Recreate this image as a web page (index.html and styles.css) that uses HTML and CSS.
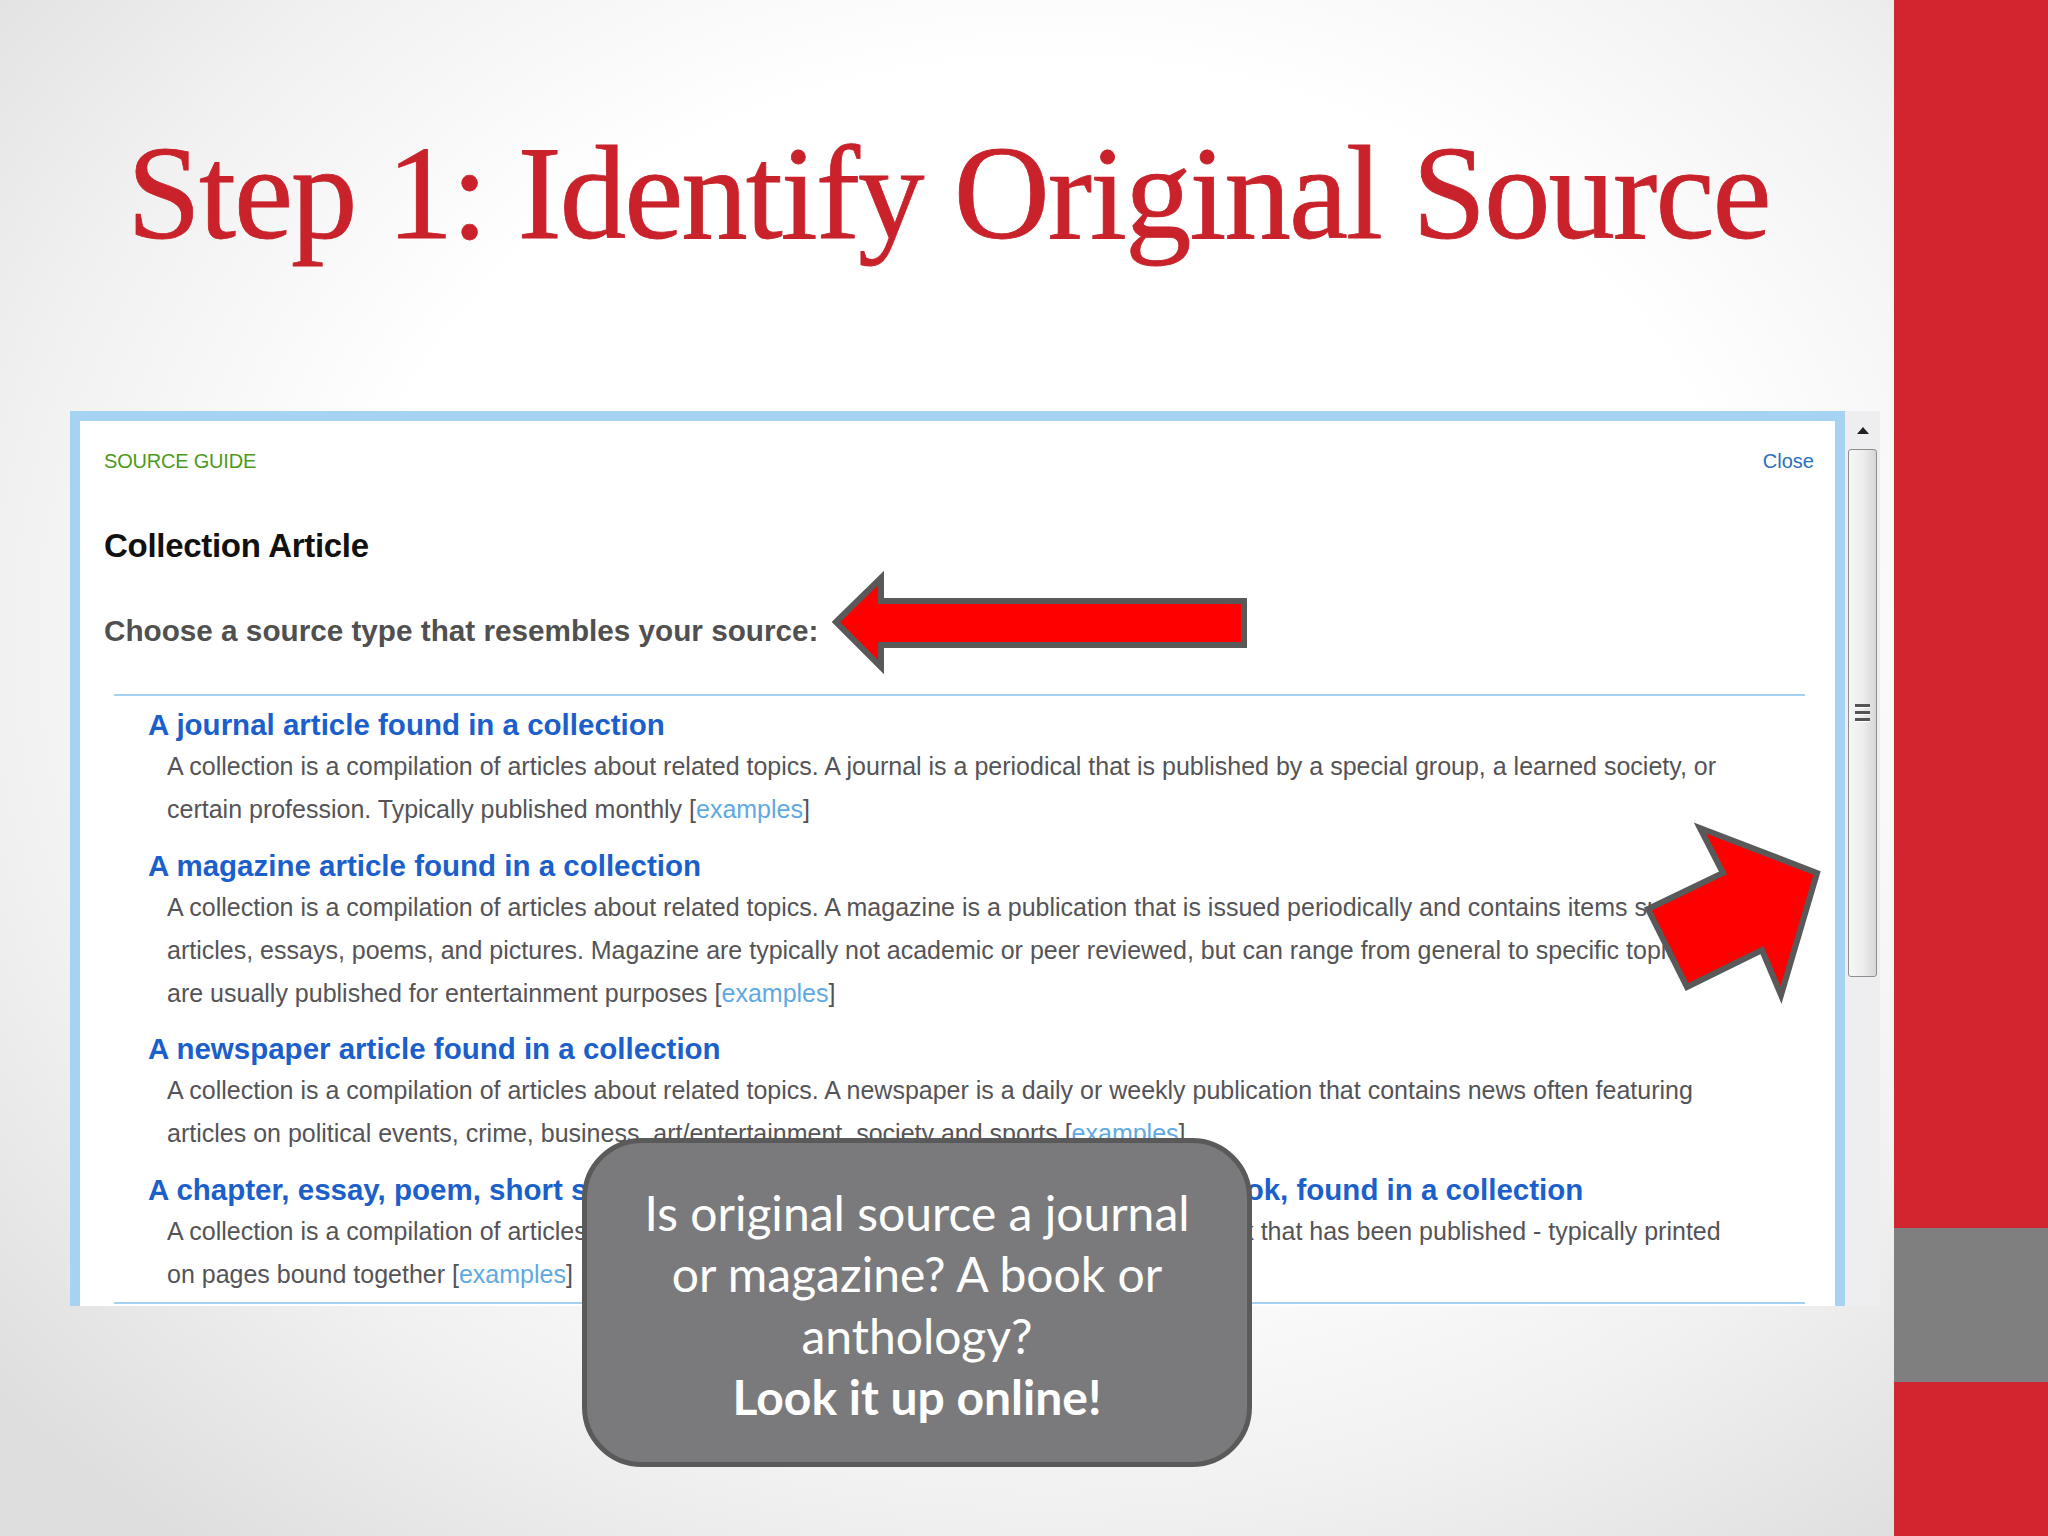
FILE: index.html
```html
<!DOCTYPE html>
<html lang="en">
<head>
<meta charset="utf-8">
<title>Step 1: Identify Original Source</title>
<link rel="stylesheet" href="styles.css">
</head>
<body>
<div class="slide">
  <main class="main">
    <h1 class="title">Step 1: Identify Original Source</h1>
    <div class="shot">
      <div class="dialog">
        <div class="dlg-head">
          <span class="guide">SOURCE GUIDE</span>
          <span class="close">Close</span>
        </div>
        <h2 class="dlg-title">Collection Article</h2>
        <p class="prompt">Choose a source type that resembles your source:</p>
        <div class="sep"></div>
        <div class="items">
          <div class="item">
            <div class="item-title">A journal article found in a collection</div>
            <div class="desc">
              <span class="ln">A collection is a compilation of articles about related topics. A journal is a periodical that is published by a special group, a learned society, or</span>
              <span class="ln">certain profession. Typically published monthly [<span class="ex">examples</span>]</span>
            </div>
          </div>
          <div class="item">
            <div class="item-title">A magazine article found in a collection</div>
            <div class="desc">
              <span class="ln">A collection is a compilation of articles about related topics. A magazine is a publication that is issued periodically and contains items such as</span>
              <span class="ln">articles, essays, poems, and pictures. Magazine are typically not academic or peer reviewed, but can range from general to specific topics and</span>
              <span class="ln">are usually published for entertainment purposes [<span class="ex">examples</span>]</span>
            </div>
          </div>
          <div class="item">
            <div class="item-title">A newspaper article found in a collection</div>
            <div class="desc">
              <span class="ln">A collection is a compilation of articles about related topics. A newspaper is a daily or weekly publication that contains news often featuring</span>
              <span class="ln">articles on political events, crime, business, art/entertainment, society and sports [<span class="ex">examples</span>]</span>
            </div>
          </div>
          <div class="item">
            <div class="item-title">A chapter, essay, poem, short story, or other section or portion of an edited book, found in a collection</div>
            <div class="desc">
              <span class="ln">A collection is a compilation of articles about related topics. A book is a long written or printed work that has been published - typically printed</span>
              <span class="ln">on pages bound together [<span class="ex">examples</span>]</span>
            </div>
          </div>
        </div>
        <div class="sep sep-bottom"></div>
      </div>
      <div class="scrollbar">
        <div class="sb-up"><span class="sb-tri"></span></div>
        <div class="sb-thumb">
          <span class="grip"></span>
          <span class="grip"></span>
          <span class="grip"></span>
        </div>
      </div>
    </div>
  </main>
  <aside class="side">
    <div class="band red-top"></div>
    <div class="band gray"></div>
    <div class="band red-bottom"></div>
  </aside>

  <svg class="arrow-left" width="430" height="110" viewBox="828 568 430 110" aria-hidden="true">
    <polygon points="836,622 881,578 881,601 1244,601 1244,645 881,645 881,667" />
  </svg>
  <svg class="arrow-right" width="200" height="200" viewBox="1636 816 200 200" aria-hidden="true">
    <polygon points="1648,909 1723,873 1700,828 1817,873 1781,995 1762,950 1687,987" />
  </svg>

  <div class="callout">
    <p class="callout-text">Is original source a journal<br>or magazine? A book or<br>anthology?<br><strong>Look it up online!</strong></p>
  </div>
</div>
</body>
</html>
```

FILE: styles.css
```css
html, body {
  margin: 0;
  padding: 0;
}

body {
  width: 2048px;
  height: 1536px;
  overflow: hidden;
  font-family: "Liberation Sans", Arial, sans-serif;
}

.slide {
  position: relative;
  width: 2048px;
  height: 1536px;
  display: flex;
  overflow: hidden;
  background: radial-gradient(ellipse 1400px 1150px at 1050px 640px, #ffffff 0%, #ffffff 50%, #f1f1f1 75%, #dedede 100%);
}

.main {
  width: 1894px;
  flex: none;
}

.title {
  margin: 127px 0 151px 127px;
  font-family: "Liberation Serif", "Times New Roman", serif;
  font-weight: normal;
  font-size: 133px;
  line-height: 133px;
  letter-spacing: -2px;
  color: #c9222b;
  white-space: nowrap;
  -webkit-text-stroke: 0.8px #c9222b;
}

/* Screenshot of the source guide dialog */
.shot {
  display: flex;
  margin-left: 70px;
  height: 895px;
}

.dialog {
  width: 1755px;
  border: 10px solid #a7d3f3;
  border-bottom: 0;
  background: #ffffff;
  overflow: hidden;
  display: flex;
  flex-direction: column;
}

.dlg-head {
  display: flex;
  justify-content: space-between;
  align-items: center;
  height: 30px;
  margin-top: 25px;
  padding: 0 21px 0 24px;
  font-size: 20px;
}

.guide {
  color: #4c9a1c;
  letter-spacing: -0.2px;
}

.close {
  color: #2a6fbc;
}

.dlg-title {
  margin: 50px 0 0 24px;
  height: 40px;
  line-height: 40px;
  font-size: 33px;
  font-weight: bold;
  color: #111111;
  letter-spacing: -0.3px;
}

.prompt {
  margin: 45px 0 0 24px;
  height: 40px;
  line-height: 40px;
  font-size: 29.7px;
  font-weight: bold;
  color: #505050;
}

.sep {
  height: 2px;
  margin: 43px 30px 0 34px;
  background: #a6d0f0;
  flex: none;
}

.sep-bottom {
  margin-top: 6px;
}

.items {
  display: flex;
  flex-direction: column;
  gap: 14.5px;
  margin: 9px 0 0 68px;
}

.item-title {
  height: 40px;
  line-height: 40px;
  font-size: 29.5px;
  font-weight: bold;
  color: #1b5fcc;
  white-space: nowrap;
}

.desc {
  display: flex;
  flex-direction: column;
  padding-left: 19px;
}

.ln {
  display: block;
  height: 43px;
  line-height: 43px;
  font-size: 25px;
  color: #545458;
  white-space: nowrap;
}

.ex {
  color: #5ea9e3;
}

/* Scrollbar */
.scrollbar {
  width: 35px;
  background: #eeeef0;
  display: flex;
  flex-direction: column;
  align-items: flex-start;
}

.sb-up {
  height: 38px;
  width: 35px;
  display: flex;
  align-items: center;
  justify-content: center;
}

.sb-tri {
  width: 0;
  height: 0;
  border-left: 6px solid transparent;
  border-right: 6px solid transparent;
  border-bottom: 7px solid #222222;
}

.sb-thumb {
  box-sizing: border-box;
  margin-left: 3px;
  width: 29px;
  height: 528px;
  border: 1px solid #8e8e8e;
  border-radius: 3px;
  background: linear-gradient(to right, #f6f6f6 0%, #eeeeee 50%, #d6d6d6 100%);
  display: flex;
  flex-direction: column;
  align-items: center;
  justify-content: center;
  gap: 3px;
}

.grip {
  display: block;
  width: 15px;
  height: 3px;
  background: #555555;
  border-bottom: 1px solid #ffffff;
}

/* Right decorative sidebar */
.side {
  width: 154px;
  flex: none;
  display: flex;
  flex-direction: column;
}

.band {
  flex: none;
}

.red-top {
  height: 1228px;
  background: #d1262f;
}

.gray {
  height: 154px;
  background: #7f7f7f;
}

.red-bottom {
  flex: 1;
  background: #d1262f;
}

/* Overlays */
.arrow-left {
  position: absolute;
  left: 828px;
  top: 568px;
}

.arrow-right {
  position: absolute;
  left: 1636px;
  top: 816px;
}

.arrow-left polygon,
.arrow-right polygon {
  fill: #ff0000;
  stroke: #595959;
  stroke-width: 6;
  stroke-linejoin: miter;
}

.callout {
  position: absolute;
  left: 582px;
  top: 1138px;
  width: 670px;
  height: 329px;
  box-sizing: border-box;
  border: 5px solid #5a5a5a;
  border-radius: 60px;
  background: #7a7a7c;
  display: flex;
  align-items: center;
  justify-content: center;
}

.callout-text {
  margin: 0;
  padding-top: 4px;
  text-align: center;
  font-family: Lato, "Open Sans", sans-serif;
  font-size: 48px;
  line-height: 61.5px;
  color: #ffffff;
}

.callout-text strong {
  font-weight: bold;
}
```
